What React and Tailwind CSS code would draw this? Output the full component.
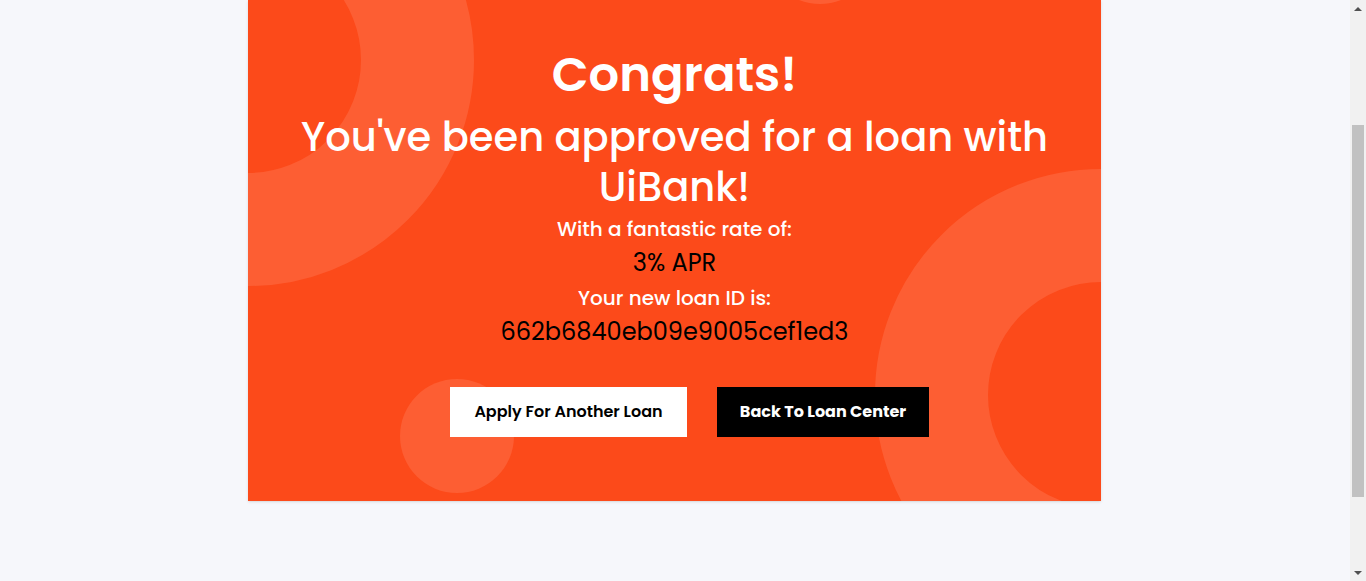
import React from 'react';

const Ring = ({ className }) => (
    <div className={`absolute rounded-full border-[113px] border-[#fd5e33] ${className}`} />
);

const Scrollbar = () => (
    <div className="w-[16px] h-full bg-[#f1f1f1] flex flex-col items-center">
        <div className="h-[17px] flex items-center justify-center">
            <div className="w-0 h-0 border-l-[4px] border-r-[4px] border-b-[4px] border-l-transparent border-r-transparent border-b-[#505050]" />
        </div>
        <div className="flex-1 w-full px-[2px] pt-[108px] pb-[67px]">
            <div className="w-full h-full bg-[#c1c1c1]" />
        </div>
        <div className="h-[17px] flex items-center justify-center">
            <div className="w-0 h-0 border-l-[4px] border-r-[4px] border-t-[4px] border-l-transparent border-r-transparent border-t-[#505050]" />
        </div>
    </div>
);

const App = () => {
    return (
        <div className="w-[1366px] h-[581px] flex bg-[#f6f7fb] overflow-hidden" style={{ fontFamily: '"Poppins", Inter, "Noto Sans", sans-serif' }}>
            <main className="flex-1 h-full overflow-hidden flex justify-start">
                <div className="ml-[248px] w-[853px] h-[501px] shrink-0 relative overflow-hidden bg-[#fc4a1a] shadow-sm">
                    {/* decorative circles */}
                    <Ring className="w-[452px] h-[452px] -left-[226px] -top-[166px]" />
                    <Ring className="w-[452px] h-[452px] left-[627px] top-[169px]" />
                    <div className="absolute w-[114px] h-[114px] rounded-full bg-[#fd5e33] left-[152px] top-[379px]" />
                    <div className="absolute w-[114px] h-[114px] rounded-full bg-[#fd5e33] left-[515px] -top-[110px]" />

                    <div className="relative flex flex-col items-center text-center pt-[46px]">
                        <h1 className="text-[48px] leading-[58px] font-semibold text-white">Congrats!</h1>
                        <h2 className="mt-[8px] text-[40px] leading-[50px] font-medium text-white">
                            You've been approved for a loan with<br />UiBank!
                        </h2>
                        <p className="mt-[2px] text-[20px] leading-[30px] font-medium text-white">With a fantastic rate of:</p>
                        <p className="mt-[2px] text-[24px] leading-[34px] text-black">3% APR</p>
                        <p className="mt-[3px] text-[20px] leading-[30px] font-medium text-white">Your new loan ID is:</p>
                        <p className="mt-[1px] text-[24px] leading-[36px] text-black">662b6840eb09e9005cef1ed3</p>
                        <div className="mt-[37px] ml-[30px] flex gap-[30px]">
                            <button className="w-[237px] h-[50px] bg-white text-black text-[16px] font-semibold">Apply For Another Loan</button>
                            <button className="w-[212px] h-[50px] bg-black text-white text-[16px] font-bold">Back To Loan Center</button>
                        </div>
                    </div>
                </div>
            </main>
            <Scrollbar />
        </div>
    );
};

export default App;
